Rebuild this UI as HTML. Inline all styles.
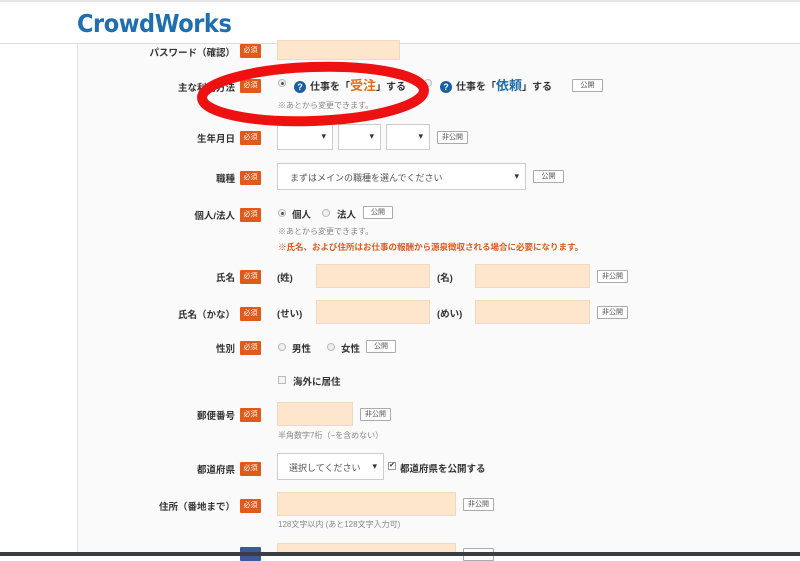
<!DOCTYPE html>
<html><head><meta charset="utf-8"><style>
*{margin:0;padding:0;box-sizing:border-box}
body{width:800px;height:556px;overflow:hidden;background:#fff;font-family:"Liberation Sans","Noto Sans CJK JP",sans-serif;position:relative;color:#333}
.hdr{position:absolute;left:0;top:0;width:800px;height:44px;background:#fff;border-bottom:1px solid #ddd;border-top:2px solid #e4e4e4}
.logo{position:absolute;left:77px;top:7px;font-size:25px;font-weight:bold;color:#1f6fb0;font-family:"DejaVu Sans","Liberation Sans",sans-serif;letter-spacing:-0.5px;transform:scaleX(0.9);transform-origin:left}
.main{position:absolute;left:77px;top:44px;width:723px;height:512px;background:#fafafa;border-left:1px solid #e0e0e0}
.lbl{position:absolute;font-size:9.5px;line-height:14px;font-weight:bold;color:#333;text-align:right;width:200px;white-space:nowrap;margin-top:3px}
.bd{position:absolute;width:21px;height:14px;background:#e05a1c;color:#fff;font-size:7px;text-align:center;line-height:14px;border-radius:1px}
.in{position:absolute;background:#fde6cc;border:1px solid #f3d9bb}
.sel{position:absolute;background:#fff;border:1px solid #ccc;font-size:9px;color:#555}
.sel:after{content:"▾";position:absolute;right:6px;top:50%;transform:translateY(-55%);font-size:9px;color:#333}
.btn{position:absolute;height:13px;border:1px solid #aaa;background:#fff;font-size:7px;color:#555;text-align:center;line-height:11px;border-radius:1px}
.rd{position:absolute;width:8px;height:8px;border-radius:50%;border:1px solid #bbb;background:#eee}
.rd.on:after{content:"";position:absolute;left:2px;top:2px;width:3px;height:3px;border-radius:50%;background:#555}
.t{position:absolute;font-size:9.5px;line-height:12px;font-weight:bold;white-space:nowrap;color:#333;margin-top:3px}
.n{position:absolute;font-size:8px;color:#888;white-space:nowrap}
.q{position:absolute;width:12px;height:12px;border-radius:50%;background:#1a5fa3;color:#fff;font-size:9px;font-weight:bold;text-align:center;line-height:12px}
</style></head><body>
<div class="hdr"><div class="logo">CrowdWorks</div></div>
<div class="main"></div>

<div class="lbl" style="left:35px;top:44px">パスワード（確認）</div><div class="bd" style="left:240px;top:44px">必須</div>
<div class="in" style="left:277px;top:40px;width:123px;height:20px"></div>

<div class="lbl" style="left:35px;top:79px">主な利用方法</div><div class="bd" style="left:240px;top:79px">必須</div>
<div class="rd on" style="left:278px;top:79px"></div>
<div class="q" style="left:294px;top:81px">?</div>
<div class="t" style="left:310px;top:79px;font-size:10px;margin-top:1px">仕事を「<span style="color:#e07020;font-size:13px">受注</span>」する</div>
<div class="rd" style="left:424px;top:79px"></div>
<div class="q" style="left:440px;top:81px">?</div>
<div class="t" style="left:456px;top:79px;font-size:10px;margin-top:1px">仕事を「<span style="color:#1f6fb0;font-size:13px">依頼</span>」する</div>
<div class="btn" style="left:572px;top:79px;width:31px">公開</div>
<div class="n" style="left:278px;top:100px">※あとから変更できます。</div>

<div class="lbl" style="left:35px;top:130px">生年月日</div><div class="bd" style="left:240px;top:131px">必須</div>
<div class="sel" style="left:277px;top:124px;width:56px;height:26px"></div>
<div class="sel" style="left:338px;top:124px;width:43px;height:26px"></div>
<div class="sel" style="left:386px;top:124px;width:44px;height:26px"></div>
<div class="btn" style="left:437px;top:131px;width:31px">非公開</div>

<div class="lbl" style="left:35px;top:170px">職種</div><div class="bd" style="left:240px;top:171px">必須</div>
<div class="sel" style="left:277px;top:163px;width:249px;height:27px;padding:7px 0 0 12px">まずはメインの職種を選んでください</div>
<div class="btn" style="left:533px;top:170px;width:31px">公開</div>

<div class="lbl" style="left:35px;top:207px">個人/法人</div><div class="bd" style="left:240px;top:208px">必須</div>
<div class="rd on" style="left:278px;top:209px"></div><div class="t" style="left:292px;top:207px">個人</div>
<div class="rd" style="left:322px;top:209px"></div><div class="t" style="left:337px;top:207px">法人</div>
<div class="btn" style="left:363px;top:206px;width:30px">公開</div>
<div class="n" style="left:278px;top:226px">※あとから変更できます。</div>
<div class="t" style="left:278px;top:238px;color:#e05a1c;font-size:8.5px">※氏名、および住所はお仕事の報酬から源泉徴収される場合に必要になります。</div>

<div class="lbl" style="left:35px;top:269px">氏名</div><div class="bd" style="left:240px;top:270px">必須</div>
<div class="t" style="left:277px;top:270px">(姓)</div>
<div class="in" style="left:316px;top:264px;width:114px;height:24px"></div>
<div class="t" style="left:437px;top:270px">(名)</div>
<div class="in" style="left:475px;top:264px;width:115px;height:24px"></div>
<div class="btn" style="left:597px;top:270px;width:31px">非公開</div>

<div class="lbl" style="left:35px;top:306px">氏名（かな）</div><div class="bd" style="left:240px;top:307px">必須</div>
<div class="t" style="left:277px;top:306px">(せい)</div>
<div class="in" style="left:316px;top:300px;width:114px;height:24px"></div>
<div class="t" style="left:437px;top:306px">(めい)</div>
<div class="in" style="left:475px;top:300px;width:115px;height:24px"></div>
<div class="btn" style="left:597px;top:306px;width:31px">非公開</div>

<div class="lbl" style="left:35px;top:340px">性別</div><div class="bd" style="left:240px;top:341px">必須</div>
<div class="rd" style="left:278px;top:343px"></div><div class="t" style="left:292px;top:341px">男性</div>
<div class="rd" style="left:327px;top:343px"></div><div class="t" style="left:341px;top:341px">女性</div>
<div class="btn" style="left:366px;top:340px;width:30px">公開</div>

<div style="position:absolute;left:278px;top:376px;width:8px;height:8px;border:1px solid #bbb;background:#f3f3f3"></div>
<div class="t" style="left:293px;top:374px">海外に居住</div>

<div class="lbl" style="left:35px;top:407px">郵便番号</div><div class="bd" style="left:240px;top:408px">必須</div>
<div class="in" style="left:277px;top:402px;width:76px;height:24px"></div>
<div class="btn" style="left:360px;top:408px;width:31px">非公開</div>
<div class="n" style="left:278px;top:430px">半角数字7桁（−を含めない）</div>

<div class="lbl" style="left:35px;top:461px">都道府県</div><div class="bd" style="left:240px;top:462px">必須</div>
<div class="sel" style="left:277px;top:453px;width:107px;height:27px;padding:7px 0 0 11px">選択してください</div>
<div style="position:absolute;left:388px;top:462px;width:8px;height:8px;border:1px solid #999;background:#fff;font-size:7px;line-height:6px;text-align:center">✔</div>
<div class="t" style="left:400px;top:461px">都道府県を公開する</div>

<div class="lbl" style="left:35px;top:498px">住所（番地まで）</div><div class="bd" style="left:240px;top:499px">必須</div>
<div class="in" style="left:277px;top:492px;width:179px;height:24px"></div>
<div class="btn" style="left:463px;top:498px;width:31px">非公開</div>
<div class="n" style="left:278px;top:519px">128文字以内 (あと128文字入力可)</div>

<div class="bd" style="left:240px;top:547px;background:#3a5a9a"></div>
<div class="in" style="left:277px;top:543px;width:179px;height:13px"></div>
<div class="btn" style="left:463px;top:548px;width:31px"></div>
<div style="position:absolute;left:0;top:552px;width:800px;height:4px;background:#3a3d42"></div>

<svg style="position:absolute;left:0;top:0" width="800" height="556"><ellipse cx="313" cy="94" rx="111" ry="27" transform="rotate(-2 313 94)" fill="none" stroke="#ee1111" stroke-width="10"/></svg>
</body></html>
